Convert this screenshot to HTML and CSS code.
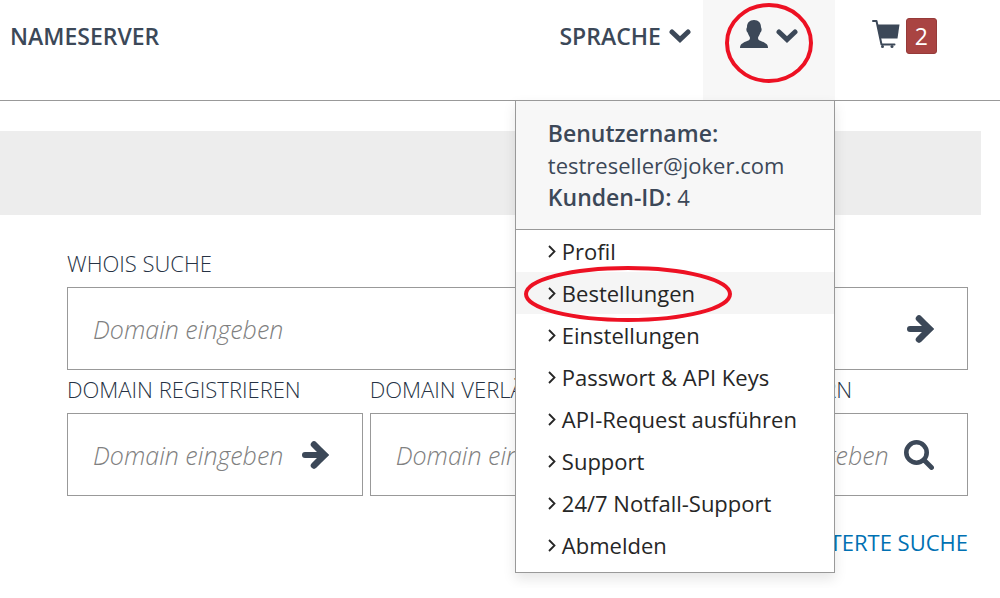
FILE: index.html
```html
<!DOCTYPE html>
<html lang="de">
<head>
    <meta charset="UTF-8">
    <meta name="viewport" content="width=device-width, initial-scale=1.0">
    <title>Joker.com</title>
    <link rel="stylesheet" href="styles.css">
</head>
<body>
    <svg class="symbols" aria-hidden="true">
        <symbol id="chevron-down" viewBox="0 0 22 14">
            <path d="M3 3L11 10.5L19 3" fill="none" stroke="currentColor" stroke-width="5" stroke-linecap="round"/>
        </symbol>
        <symbol id="chevron-right" viewBox="0 0 8 14">
            <path d="M1 2L6.5 7.5L1 13" fill="none" stroke="currentColor" stroke-width="1.800"/>
        </symbol>
        <symbol id="user" viewBox="0 0 28 28">
            <path d="M14 0C18.600 0 21 3 21 7C21 8 22 8.500 21.500 10.500C21.200 12 20.500 12 20 13.500C19.500 15.500 18 16.500 18 18C18 20 19.500 20.500 22 21.500C26 23.200 28 24.500 28 28H0C0 24.500 2 23.200 6 21.500C8.500 20.500 10 20 10 18C10 16.500 8.500 15.500 8 13.500C7.500 12 6.800 12 6.500 10.500C6 8.500 7 8 7 7C7 3 9.400 0 14 0Z" fill="currentColor"/>
        </symbol>
        <symbol id="cart" viewBox="0 0 28 28">
            <path d="M1 1H4.500L9.500 24.500H22.500" fill="none" stroke="currentColor" stroke-width="2" stroke-linecap="round" stroke-linejoin="round"/>
            <path d="M5 4.500H27.500L25.500 18.500H8Z" fill="currentColor"/>
            <circle cx="10.500" cy="26.500" r="1.500" fill="currentColor"/>
            <circle cx="20" cy="26.500" r="1.500" fill="currentColor"/>
        </symbol>
        <symbol id="arrow-right" viewBox="0 0 27 28">
            <path d="M3 14H20" fill="none" stroke="currentColor" stroke-width="6" stroke-linecap="round"/>
            <path d="M12 3.500L22.500 14L12 24.500" fill="none" stroke="currentColor" stroke-width="6.500" stroke-linecap="round"/>
            <path d="M20 7.500L27 14L20 20.500Z" fill="currentColor"/>
        </symbol>
        <symbol id="search" viewBox="0 0 30 30">
            <circle cx="12.500" cy="12.500" r="10.200" fill="none" stroke="currentColor" stroke-width="4.600"/>
            <path d="M20.500 20.500L27.500 27.500" stroke="currentColor" stroke-width="4.800" stroke-linecap="round"/>
        </symbol>
    </svg>

    <header class="topbar">
        <a class="nav-link" href="#">NAMESERVER</a>
        <nav class="topbar-right">
            <button class="nav-button" type="button">SPRACHE
                <svg class="icon-chevron"><use href="#chevron-down"/></svg>
            </button>
            <div class="account">
                <button class="account-toggle" type="button" aria-label="Benutzerkonto" aria-expanded="true">
                    <svg class="icon-user"><use href="#user"/></svg>
                    <svg class="icon-chevron"><use href="#chevron-down"/></svg>
                </button>
                <svg class="marker marker-account" viewBox="0 0 88 80" aria-hidden="true">
                    <ellipse cx="44" cy="40" rx="42" ry="38"/>
                </svg>
                <div class="account-menu">
                    <div class="account-info">
                        <strong>Benutzername:</strong><br>
                        testreseller@joker.com<br>
                        <strong>Kunden-ID:</strong> 4
                    </div>
                    <ul class="menu-list">
                        <li><a href="#"><svg class="icon-item"><use href="#chevron-right"/></svg>Profil</a></li>
                        <li class="active">
                            <a href="#"><svg class="icon-item"><use href="#chevron-right"/></svg>Bestellungen</a>
                            <svg class="marker marker-item" viewBox="0 0 208 56" aria-hidden="true">
                                <ellipse cx="104" cy="28" rx="102" ry="26"/>
                            </svg>
                        </li>
                        <li><a href="#"><svg class="icon-item"><use href="#chevron-right"/></svg>Einstellungen</a></li>
                        <li><a href="#"><svg class="icon-item"><use href="#chevron-right"/></svg>Passwort &amp; API Keys</a></li>
                        <li><a href="#"><svg class="icon-item"><use href="#chevron-right"/></svg>API-Request ausführen</a></li>
                        <li><a href="#"><svg class="icon-item"><use href="#chevron-right"/></svg>Support</a></li>
                        <li><a href="#"><svg class="icon-item"><use href="#chevron-right"/></svg>24/7 Notfall-Support</a></li>
                        <li><a href="#"><svg class="icon-item"><use href="#chevron-right"/></svg>Abmelden</a></li>
                    </ul>
                </div>
            </div>
            <a class="cart" href="#" aria-label="Warenkorb">
                <svg class="icon-cart"><use href="#cart"/></svg>
                <span class="badge">2</span>
            </a>
        </nav>
    </header>

    <main>
        <div class="banner"></div>
        <div class="search-area">
            <form class="search">
                <label for="whois">WHOIS SUCHE</label>
                <div class="field">
                    <input type="text" id="whois" placeholder="Domain eingeben">
                    <button type="submit" aria-label="Suchen"><svg class="icon-arrow"><use href="#arrow-right"/></svg></button>
                </div>
            </form>
            <div class="search-row">
                <form class="search">
                    <label for="register">DOMAIN REGISTRIEREN</label>
                    <div class="field">
                        <input type="text" id="register" placeholder="Domain eingeben">
                        <button type="submit" aria-label="Registrieren"><svg class="icon-arrow"><use href="#arrow-right"/></svg></button>
                    </div>
                </form>
                <form class="search">
                    <label for="renew">DOMAIN VERLÄNGERN</label>
                    <div class="field">
                        <input type="text" id="renew" placeholder="Domain eingeben">
                        <button type="submit" aria-label="Verlängern"><svg class="icon-arrow"><use href="#arrow-right"/></svg></button>
                    </div>
                </form>
                <form class="search">
                    <label for="change">DOMAIN SICHERN</label>
                    <div class="field">
                        <input type="text" id="change" placeholder="Domain eingeben">
                        <button type="submit" aria-label="Suchen"><svg class="icon-search"><use href="#search"/></svg></button>
                    </div>
                </form>
            </div>
            <a class="advanced" href="#">ERWEITERTE SUCHE</a>
        </div>
    </main>
</body>
</html>
```

FILE: styles.css
```css
* {
    box-sizing: border-box;
}

body {
    margin: 0;
    font-family: "Open Sans", sans-serif;
    font-size: 22px;
    color: #3c4858;
    background-color: #fff;
}

a {
    color: inherit;
    text-decoration: none;
}

button {
    padding: 0;
    border: none;
    background: none;
    font: inherit;
    color: inherit;
    cursor: pointer;
}

svg {
    display: block;
    flex: none;
}

.symbols {
    display: none;
}

/* top bar */
.topbar {
    display: flex;
    justify-content: space-between;
    padding: 0 63px 0 10px;
    border-bottom: 1px solid #999;
    font-size: 23px;
    line-height: 36px;
}

.nav-link,
.nav-button,
.account-toggle,
.cart {
    display: flex;
    align-items: center;
    padding: 18px 0 46px;
}

.nav-link,
.nav-button {
    font-weight: 600;
}

.nav-button {
    gap: 8px;
}

.topbar-right {
    display: flex;
}

.account {
    position: relative;
    margin: 0 37px 0 12px;
    background-color: #f7f7f7;
}

.account-toggle {
    gap: 8px;
    height: 100%;
    padding-left: 37px;
    padding-right: 37px;
}

.cart {
    gap: 6px;
}

.badge {
    padding: 0 8px;
    border: 1px solid #963a39;
    border-radius: 3px;
    background-color: #a94442;
    line-height: 34px;
    color: #fff;
}

.icon-chevron {
    width: 22px;
    height: 14px;
}

.icon-user,
.icon-cart {
    width: 28px;
    height: 28px;
    margin-bottom: 4px;
}

.icon-arrow {
    width: 27px;
    height: 28px;
}

.icon-search {
    width: 30px;
    height: 30px;
}

/* account menu */
.account-menu {
    position: absolute;
    top: 100%;
    right: 0;
    width: 320px;
    border: 1px solid #999;
    background-color: #fff;
    font-size: 22px;
    box-shadow: 0 6px 12px rgba(0, 0, 0, 0.1);
}

.account-info {
    padding: 16px 32px;
    border-bottom: 1px solid #999;
    background-color: #f7f7f7;
    line-height: 32px;
}

.account-info strong {
    font-size: 23px;
    font-weight: 600;
}

.menu-list {
    margin: 0;
    padding: 0 0 6px;
    list-style: none;
    line-height: 42px;
    color: #262626;
}

.menu-list a {
    display: flex;
    align-items: center;
    gap: 6px;
    padding-left: 32px;
}

.menu-list .active {
    position: relative;
    background-color: #f5f5f5;
}

.icon-item {
    width: 8px;
    height: 14px;
}

/* hand drawn style highlights */
.marker {
    position: absolute;
    fill: none;
    stroke: #ed1123;
    stroke-width: 4px;
    pointer-events: none;
}

.marker-account {
    top: 3px;
    left: 22px;
    width: 88px;
    height: 80px;
}

.marker-item {
    top: -6px;
    left: 8px;
    width: 208px;
    height: 56px;
}

/* search forms */
.banner {
    height: 84px;
    margin: 30px 19px 29px 0;
    background-color: #ededed;
}

.search-area {
    display: flex;
    flex-direction: column;
    padding: 0 32px 0 67px;
}

.search-row {
    display: grid;
    grid-template-columns: repeat(3, minmax(0, 1fr));
    gap: 7px;
}

.search label {
    display: block;
    margin-bottom: 4px;
    font-weight: 300;
    line-height: 39px;
    color: #263244;
    white-space: nowrap;
}

.field {
    display: flex;
    align-items: center;
    padding: 0 33px 0 25px;
    border: 1px solid #999;
}

.field input {
    flex: 1;
    min-width: 0;
    height: 81px;
    padding: 0;
    border: none;
    outline: none;
    background: none;
    font: inherit;
    font-size: 25px;
    font-weight: 300;
    font-style: italic;
    color: #3c4858;
}

.field input::placeholder {
    color: #808080;
}

.advanced {
    align-self: flex-end;
    padding: 30px 0;
    line-height: 32px;
    color: #0071b3;
}
```
